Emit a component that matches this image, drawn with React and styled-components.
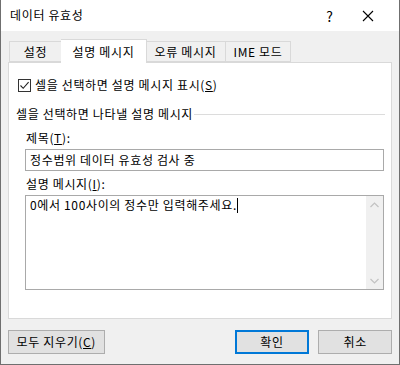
import React from "react";
import styled, { createGlobalStyle } from "styled-components";

const Global = createGlobalStyle`
  html, body { margin: 0; padding: 0; background: #fff; }
  body { font-family: "Noto Sans CJK KR", "Noto Sans", sans-serif; font-size: 12px; color: #000; letter-spacing: 0.65px; }
  * { box-sizing: border-box; }
`;

const Window = styled.div`
  width: 400px;
  height: 365px;
  border: 1px solid #6f6f6f;
  border-top: none;
  display: flex;
  flex-direction: column;
  background: #f0f0f0;
`;

const TitleBar = styled.div`
  height: 31px;
  background: #fff;
  display: flex;
  align-items: center;
  padding-left: 9px;
`;

const TitleText = styled.div`
  flex: 1;
  line-height: 16px;
  margin-top: -1px;
`;

const TitleBtn = styled.div`
  width: ${p => p.$w}px;
  height: 31px;
  display: flex;
  align-items: center;
  justify-content: center;
  font-size: 14px;
`;

const Body = styled.div`
  flex: 1;
  display: flex;
  flex-direction: column;
  padding: 8px 7px 0 7px;
`;

const TabRow = styled.div`
  display: flex;
  align-items: flex-end;
  height: 23px;
  padding-left: 1px;
  position: relative;
  z-index: 1;
`;

const Tab = styled.div`
  height: ${p => (p.$active ? 24 : 21)}px;
  width: ${p => p.$w}px;
  border: 1px solid #d9d9d9;
  border-bottom: ${p => (p.$active ? "none" : "1px solid #d9d9d9")};
  margin-left: ${p => (p.$active ? -1 : 0)}px;
  margin-right: ${p => (p.$active ? -1 : 0)}px;
  margin-bottom: ${p => (p.$active ? -1 : 0)}px;
  background: ${p => (p.$active ? "#fff" : "#f0f0f0")};
  display: flex;
  justify-content: center;
  align-items: center;
  padding-top: ${p => (p.$active ? 0 : 1)}px;
  line-height: 16px;
  white-space: nowrap;
  z-index: ${p => (p.$active ? 2 : 1)};
  & + & { border-left: ${p => (p.$active ? "1px solid #d9d9d9" : "none")}; }
`;

const Panel = styled.div`
  width: 384px;
  height: 257px;
  border: 1px solid #d9d9d9;
  background: #fff;
  display: flex;
  flex-direction: column;
  padding: 15px 7px 0 9px;
`;

const CheckRow = styled.label`
  display: flex;
  align-items: center;
  height: 14px;
  gap: 4px;
`;

const CheckBox = styled.span`
  width: 13px;
  height: 13px;
  border: 1px solid #333;
  background: #fff;
  display: flex;
  align-items: center;
  justify-content: center;
`;

const Text = styled.span`
  line-height: 16px;
  white-space: nowrap;
`;

const U = styled.span`
  text-decoration: underline;
`;

const GroupHeader = styled.div`
  display: flex;
  align-items: center;
  margin-top: 14px;
  margin-left: -2px;
  height: 16px;
`;

const GroupLine = styled.div`
  flex: 1;
  height: 1px;
  background: #dcdcdc;
  margin-left: 1px;
  margin-right: -1px;
  margin-top: 1px;
`;

const FieldLabel = styled.div`
  margin-left: 8px;
  margin-top: ${p => p.$mt}px;
  line-height: 16px;
  height: 16px;
`;

const Input = styled.div`
  margin-left: 7px;
  margin-top: 3px;
  height: 22px;
  border: 1px solid #a9a9a9;
  display: flex;
  align-items: center;
  padding-left: 4px;
  line-height: 16px;
  white-space: nowrap;
`;

const TextArea = styled.div`
  margin-left: 7px;
  margin-top: 3px;
  height: 95px;
  border: 1px solid #a9a9a9;
  display: flex;
`;

const AreaText = styled.div`
  flex: 1;
  padding: 1px 0 0 4px;
  line-height: 16px;
  display: flex;
  align-items: flex-start;
  white-space: nowrap;
`;

const Caret = styled.span`
  display: inline-block;
  width: 1px;
  height: 15px;
  background: #000;
  margin-left: 0px;
  margin-top: 1px;
`;

const ScrollBar = styled.div`
  width: 17px;
  background: #f0f0f0;
  display: flex;
  flex-direction: column;
  justify-content: space-between;
  align-items: center;
`;

const Arrow = styled.div`
  height: 17px;
  width: 17px;
  display: flex;
  align-items: center;
  justify-content: center;
`;

const ButtonRow = styled.div`
  display: flex;
  margin-top: 11px;
  align-items: center;
`;

const Button = styled.div`
  width: ${p => p.$w}px;
  height: 24px;
  margin-left: ${p => p.$ml || 0}px;
  background: #e1e1e1;
  border: ${p => (p.$primary ? "2px solid #0078d7" : "1px solid #adadad")};
  display: flex;
  align-items: center;
  justify-content: center;
  line-height: 16px;
  white-space: nowrap;
`;

export default function App() {
  return (
    <>
      <Global />
      <Window>
        <TitleBar>
          <TitleText>데이터 유효성</TitleText>
          <TitleBtn $w={30}>?</TitleBtn>
          <TitleBtn $w={46} style={{ marginRight: 8 }}>
            <svg width="12" height="12" viewBox="0 0 12 12">
              <path d="M1 1 L11 11 M11 1 L1 11" stroke="#000" strokeWidth="1.1" />
            </svg>
          </TitleBtn>
        </TitleBar>
        <Body>
          <TabRow>
            <Tab $w={53}>설정</Tab>
            <Tab $w={86} $active>설명 메시지</Tab>
            <Tab $w={80}>오류 메시지</Tab>
            <Tab $w={65}>IME 모드</Tab>
          </TabRow>
          <Panel>
            <CheckRow>
              <CheckBox>
                <svg width="11" height="11" viewBox="0 0 11 11">
                  <path d="M1.5 5.5 L4.2 8.3 L9.6 2.2" stroke="#222" strokeWidth="1.1" fill="none" />
                </svg>
              </CheckBox>
              <Text>셀을 선택하면 설명 메시지 표시(<U>S</U>)</Text>
            </CheckRow>
            <GroupHeader>
              <Text>셀을 선택하면 나타낼 설명 메시지</Text>
              <GroupLine />
            </GroupHeader>
            <FieldLabel $mt={8}>제목(<U>T</U>):</FieldLabel>
            <Input>정수범위 데이터 유효성 검사 중</Input>
            <FieldLabel $mt={5}>설명 메시지(<U>I</U>):</FieldLabel>
            <TextArea>
              <AreaText>
                <span>0에서 100사이의 정수만 입력해주세요.</span>
                <Caret />
              </AreaText>
              <ScrollBar>
                <Arrow>
                  <svg width="9" height="6" viewBox="0 0 9 6">
                    <path d="M0.5 5 L4.5 1 L8.5 5" stroke="#c2c2c2" strokeWidth="1.2" fill="none" />
                  </svg>
                </Arrow>
                <Arrow>
                  <svg width="9" height="6" viewBox="0 0 9 6">
                    <path d="M0.5 1 L4.5 5 L8.5 1" stroke="#c2c2c2" strokeWidth="1.2" fill="none" />
                  </svg>
                </Arrow>
              </ScrollBar>
            </TextArea>
          </Panel>
          <ButtonRow>
            <Button $w={97}>모두 지우기(<U>C</U>)</Button>
            <Button $w={75} $ml={130} $primary>확인</Button>
            <Button $w={74} $ml={9}>취소</Button>
          </ButtonRow>
        </Body>
      </Window>
    </>
  );
}
